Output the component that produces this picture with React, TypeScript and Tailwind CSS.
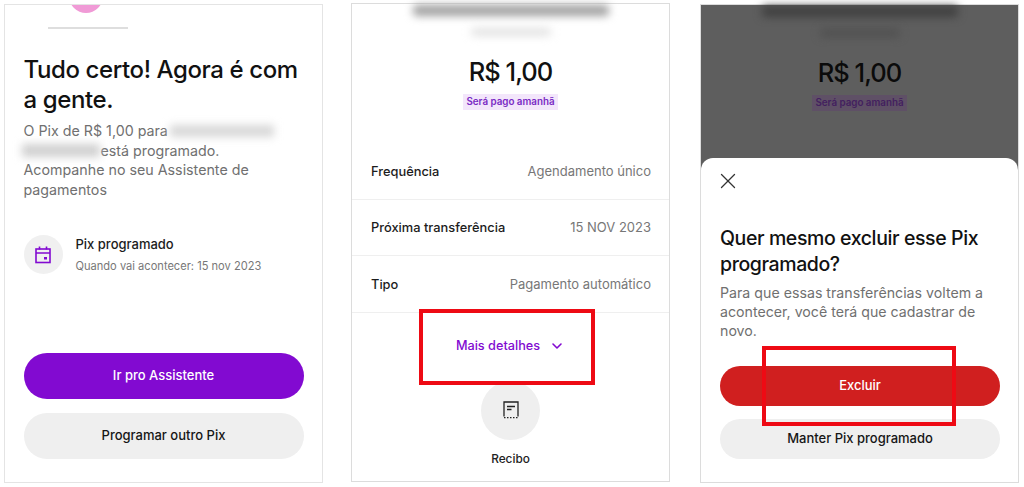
import { ChevronDown, X } from 'lucide-react';

const font = { fontFamily: 'Inter, sans-serif' };

function CalendarIcon() {
  return (
    <svg width="20" height="20" viewBox="0 0 20 20" fill="none" stroke="#820ad1" strokeWidth="1.6">
      <rect x="3" y="4" width="14" height="13.5" />
      <path d="M3 8h14M6.5 1.5v3M13.5 1.5v3" />
      <rect x="11" y="12" width="3" height="2.5" fill="#820ad1" stroke="none" />
    </svg>
  );
}

function ReceiptIcon() {
  return (
    <svg width="18" height="18" viewBox="0 0 18 18" fill="none" stroke="#222" strokeWidth="1.3">
      <path d="M2 15.5V1h14v14.5" />
      <path d="M5 5.5h8M5 8.5h4.5" />
      <path d="M2 16.6h14" strokeDasharray="1.5 1.5" />
    </svg>
  );
}

function PixHeader({ dark }: { dark?: boolean }) {
  return (
    <div className="flex flex-col items-center">
      <div className={`mt-px h-[11px] w-[196px] rounded-sm blur-[4px] ${dark ? 'bg-[#404040]' : 'bg-[#a0a0a0]'}`} />
      <div className={`mt-[12px] h-[8px] w-[80px] rounded-sm blur-[4px] ${dark ? 'bg-[#505050]' : 'bg-[#e2e2e2]'}`} />
      <div className={`mt-[19px] text-[25.5px] leading-[34px] font-medium tracking-[-1px] ${dark ? 'text-[#0b0b0b]' : 'text-[#111]'}`}>R$ 1,00</div>
      <div className={`mt-[5px] px-[3px] h-[16px] flex items-center text-[9.8px] font-semibold ${dark ? 'bg-[#5f5066] text-[#43205f]' : 'bg-[#f3e6fb] text-[#7a2bc4]'}`}>
        Será pago amanhã
      </div>
    </div>
  );
}

function Row({ label, value }: { label: string; value: string }) {
  return (
    <div className="h-[56.4px] pt-px flex items-center justify-between pl-[19px] pr-[18px] border-b border-[#efefef]">
      <span className="text-[12.85px] font-medium text-[#1c1c1c]">{label}</span>
      <span className="text-[13px] text-[#777]">{value}</span>
    </div>
  );
}

function PanelOne() {
  return (
    <div className="w-[319px] h-[479px] shrink-0 mt-1 border border-[#e4e4e4] overflow-hidden flex flex-col px-[18.5px] pb-[23px]">
      <div className="h-[34px] w-[34px] -mt-[26px] ml-[45.5px] rounded-full bg-[#f09ad6]" />
      <div className="h-[2px] w-[80px] ml-[24.5px] mt-[14px] bg-[#dedede] blur-[0.5px]" />
      <h1 className="mt-[26px] text-[24px] leading-[30px] font-medium tracking-[-0.4px] text-[#111]">
        Tudo certo! Agora é com a gente.
      </h1>
      <div className="mt-[6px] text-[14.25px] leading-[19.5px] text-[#707070]">
        <div className="flex items-center">
          O Pix de R$ 1,00 para
          <span className="ml-[2px] h-[12px] w-[104px] bg-[#d8d8d8] blur-[4px]" />
        </div>
        <div className="flex items-center">
          <span className="h-[13px] w-[78px] -ml-[2px] mr-[1px] bg-[#d0d0d0] blur-[4px]" />
          está programado.
        </div>
        <div>Acompanhe no seu Assistente de</div>
        <div>pagamentos</div>
      </div>
      <div className="mt-[36px] flex items-center gap-[13px]">
        <div className="w-[39px] h-[39px] rounded-full bg-[#f0f0f0] flex items-center justify-center">
          <CalendarIcon />
        </div>
        <div>
          <div className="text-[13px] leading-[17px] font-medium text-[#1c1c1c]">Pix programado</div>
          <div className="mt-[6px] text-[11.1px] leading-[15px] text-[#777]">Quando vai acontecer: 15 nov 2023</div>
        </div>
      </div>
      <div className="mt-auto flex flex-col gap-[14px]">
        <button className="h-[46px] rounded-full bg-[#820ad1] text-white text-[13px] font-medium">Ir pro Assistente</button>
        <button className="h-[46px] rounded-full bg-[#efefef] text-[#161616] text-[13px] font-medium">Programar outro Pix</button>
      </div>
    </div>
  );
}

function PanelTwo() {
  return (
    <div className="relative w-[319px] h-[479px] shrink-0 mt-[3px] border border-[#dcdcdc] flex flex-col">
      <PixHeader />
      <div className="mt-[33.5px]">
        <Row label="Frequência" value="Agendamento único" />
        <Row label="Próxima transferência" value="15 NOV 2023" />
        <Row label="Tipo" value="Pagamento automático" />
      </div>
      <div className="mt-[23px] h-[20px] flex items-center justify-center gap-[9px] text-[#820ad1] text-[12.7px] font-medium">
        Mais detalhes
        <ChevronDown size={16} strokeWidth={2.4} />
      </div>
      <div className="mt-[25px] mx-auto w-[59px] h-[59px] rounded-full bg-[#efefef] flex items-center justify-center">
        <ReceiptIcon />
      </div>
      <div className="mt-[11px] text-center text-[11.8px] font-medium text-[#222]">Recibo</div>
      <div className="absolute left-[67px] top-[305px] w-[176px] h-[76px] border-[4px] border-[#ee0a14]" />
    </div>
  );
}

function PanelThree() {
  return (
    <div className="relative w-[319px] h-[479px] shrink-0 mt-1 ml-[2px] border border-[#dcdcdc] flex flex-col bg-[#5e5e5e]">
      <PixHeader dark />
      <div className="absolute left-0 right-0 bottom-0 top-[153px] bg-white rounded-t-[12px] flex flex-col pl-[19px] pr-[18px]">
        <X size={26} strokeWidth={1.2} className="mt-[10px] -ml-[5px] text-[#333]" />
        <h2 className="mt-[31px] text-[19.5px] leading-[26px] font-medium tracking-[-0.4px] text-[#111]">
          Quer mesmo excluir esse Pix programado?
        </h2>
        <p className="mt-[6px] text-[14.2px] leading-[19px] text-[#707070]">
          Para que essas transferências voltem a acontecer, você terá que cadastrar de novo.
        </p>
        <button className="mt-[26px] h-[39.5px] rounded-full bg-[#d01f1f] text-white text-[13px] font-medium">Excluir</button>
        <button className="mt-[13px] h-[40px] rounded-full bg-[#efefef] text-[#161616] text-[13px] font-medium">Manter Pix programado</button>
      </div>
      <div className="absolute left-[61px] top-[341px] w-[194px] h-[80px] border-[4px] border-[#ee0a14]" />
    </div>
  );
}

export default function App() {
  return (
    <div className="w-[1024px] h-[487px] bg-white overflow-hidden flex items-start pl-1 gap-[28px]" style={font}>
      <PanelOne />
      <PanelTwo />
      <PanelThree />
    </div>
  );
}
